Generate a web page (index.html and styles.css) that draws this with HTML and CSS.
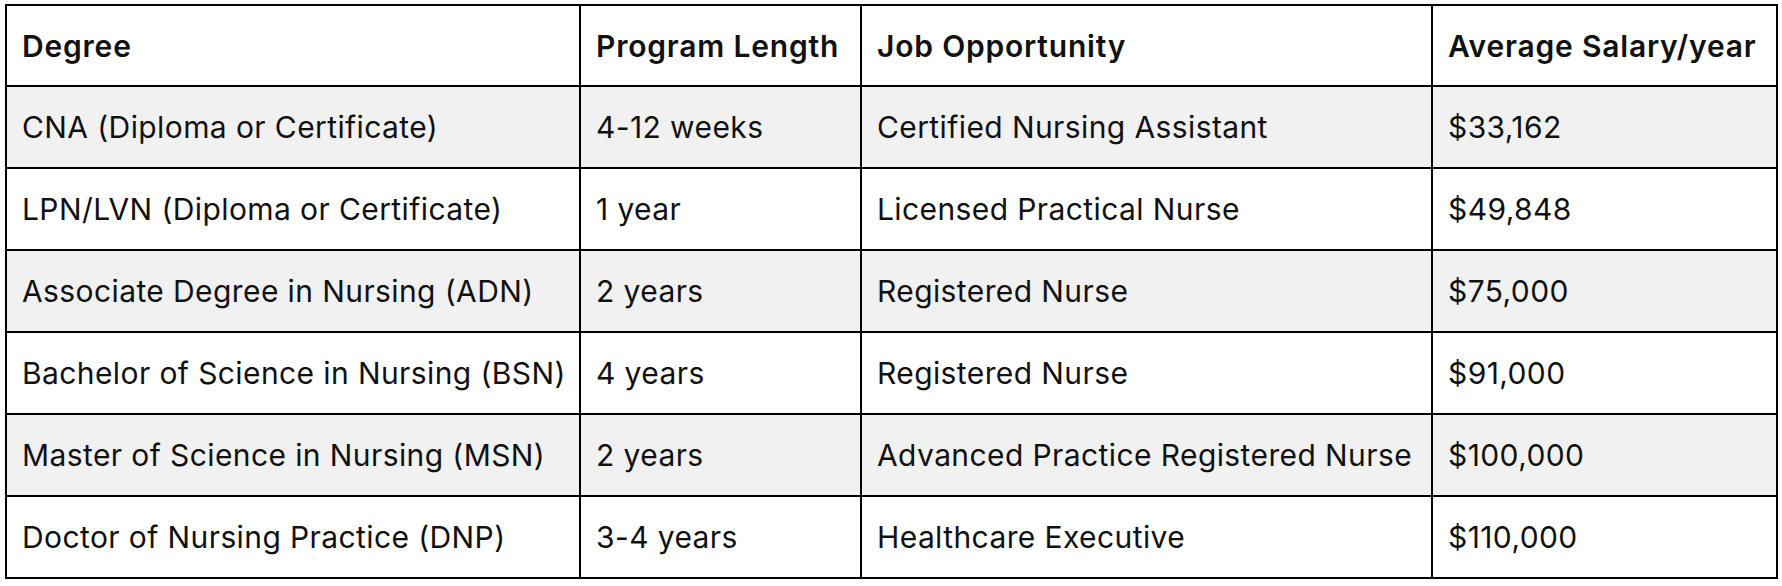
FILE: index.html
```html
<!DOCTYPE html>
<html lang="en">
<head>
<meta charset="utf-8">
<title>Nursing Degrees</title>
<link rel="stylesheet" href="styles.css">
</head>
<body>
<table class="degrees">
  <colgroup>
    <col class="c1"><col class="c2"><col class="c3"><col class="c4">
  </colgroup>
  <thead>
    <tr class="head">
      <th>Degree</th>
      <th>Program Length</th>
      <th>Job Opportunity</th>
      <th>Average Salary/year</th>
    </tr>
  </thead>
  <tbody>
    <tr class="shade">
      <td>CNA (Diploma or Certificate)</td>
      <td>4-12 weeks</td>
      <td>Certified Nursing Assistant</td>
      <td>$33,162</td>
    </tr>
    <tr>
      <td>LPN/LVN (Diploma or Certificate)</td>
      <td>1 year</td>
      <td>Licensed Practical Nurse</td>
      <td>$49,848</td>
    </tr>
    <tr class="shade">
      <td>Associate Degree in Nursing (ADN)</td>
      <td>2 years</td>
      <td>Registered Nurse</td>
      <td>$75,000</td>
    </tr>
    <tr>
      <td>Bachelor of Science in Nursing (BSN)</td>
      <td>4 years</td>
      <td>Registered Nurse</td>
      <td>$91,000</td>
    </tr>
    <tr class="shade">
      <td>Master of Science in Nursing (MSN)</td>
      <td>2 years</td>
      <td>Advanced Practice Registered Nurse</td>
      <td>$100,000</td>
    </tr>
    <tr>
      <td>Doctor of Nursing Practice (DNP)</td>
      <td>3-4 years</td>
      <td>Healthcare Executive</td>
      <td>$110,000</td>
    </tr>
  </tbody>
</table>
</body>
</html>
```
FILE: styles.css
```css
html, body {
  margin: 0;
  padding: 0;
  background: #ffffff;
}

body {
  padding: 4px 0 0 5px;
  font-family: Inter, "Noto Sans", sans-serif;
  color: #111111;
}

.degrees {
  table-layout: fixed;
  border-collapse: separate;
  border-spacing: 0;
  width: 1773px;
  border-top: 2px solid #000;
  border-left: 2px solid #000;
}

.c1 { width: 574px; }
.c2 { width: 281px; }
.c3 { width: 571px; }
.c4 { width: 345px; }

.degrees th,
.degrees td {
  box-sizing: border-box;
  border-right: 2px solid #000;
  border-bottom: 2px solid #000;
  padding: 0 0 0 15px;
  text-align: left;
  vertical-align: middle;
  font-size: 30px;
  white-space: nowrap;
  overflow: hidden;
}

.degrees th {
  height: 81px;
  font-weight: 600;
  letter-spacing: 0.8px;
}

.degrees td {
  height: 82px;
  font-weight: 400;
  letter-spacing: 0.4px;
}

.shade td {
  background: #f1f1f1;
}
```
